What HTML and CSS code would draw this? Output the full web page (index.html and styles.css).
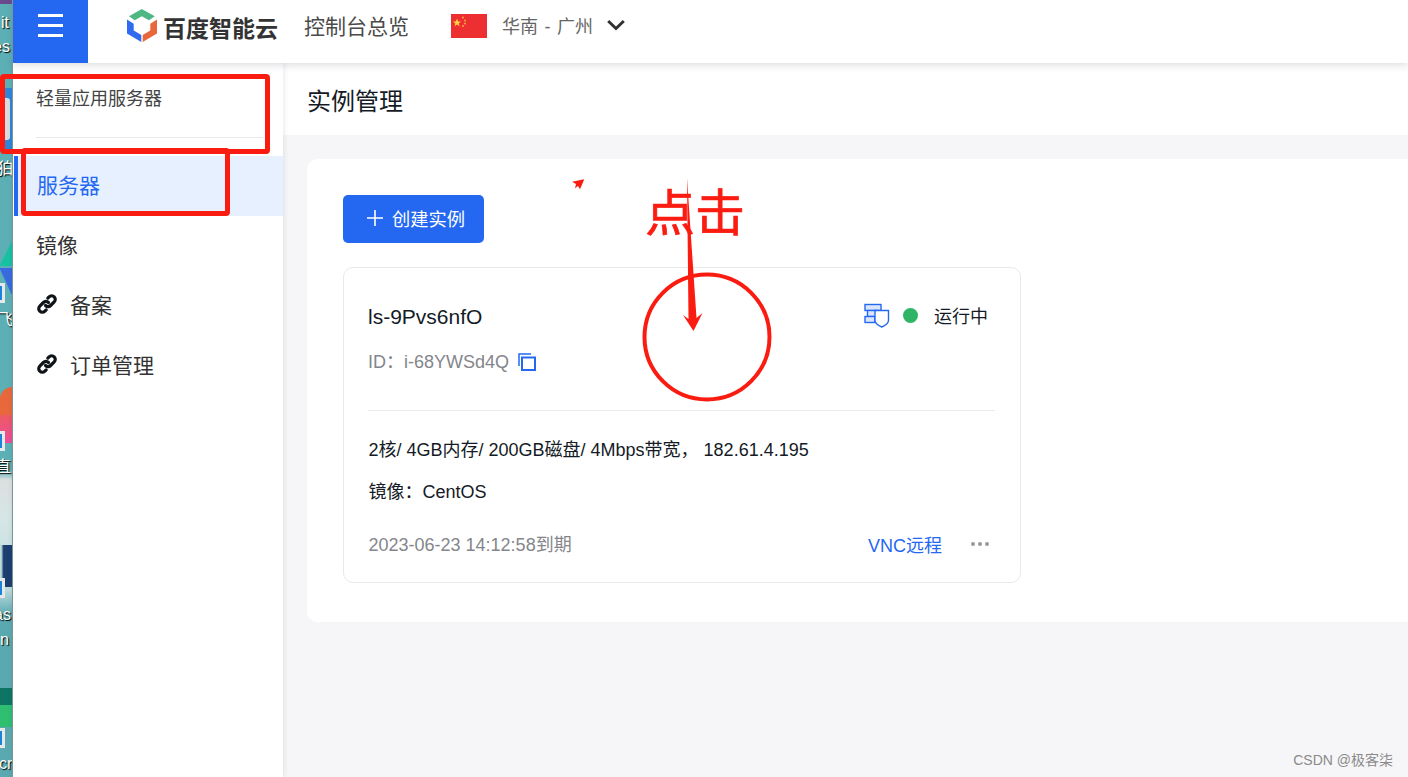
FILE: index.html
```html
<!DOCTYPE html>
<html lang="zh-CN">
  <head>
    <meta charset="UTF-8" />
    <title>百度智能云 - 实例管理</title>
    <link rel="stylesheet" href="styles.css">
  </head>
  <body>
    <!-- desktop peeking out on the left of the browser window -->
    <div class="desktop">
      <span class="desk-blob desk-top"></span>
      <span class="desk-blob desk-blue"></span>
      <span class="desk-blob desk-ring"></span>
      <span class="desk-blob desk-green"></span>
      <span class="desk-blob desk-indigo"></span>
      <span class="desk-blob desk-orange"></span>
      <span class="desk-blob desk-pink"></span>
      <span class="desk-blob desk-navy"></span>
      <span class="desk-blob desk-android"></span>
      <span class="desk-blob desk-android2"></span>
      <span class="desk-shortcut shortcut-1"></span>
      <span class="desk-shortcut shortcut-2"></span>
      <span class="desk-shortcut shortcut-3"></span>
      <span class="desk-shortcut shortcut-4"></span>
      <span class="desk-label label-it">it</span>
      <span class="desk-label label-es">es</span>
      <span class="desk-label label-gou">狛</span>
      <span class="desk-label label-fei">飞</span>
      <span class="desk-label label-zhi">直</span>
      <span class="desk-label label-as">as</span>
      <span class="desk-label label-n">n</span>
      <span class="desk-label label-cr">cr</span>
    </div>

    <div class="app">
      <header class="topbar">
        <button class="menu-btn" aria-label="menu">
          <span></span><span></span><span></span>
        </button>
        <div class="logo">
          <svg class="logo-icon" viewBox="0 0 30 33" width="30" height="33">
            <path d="M14.8 0 L27.8 7.3 L22 11.3 L14.8 7.3 L7.7 11.3 L2 7.3 Z" fill="#4fb783" />
            <path d="M0 10.6 L6.7 14.7 L6.7 21.5 L14.3 26 L14.3 33 L0 24.5 Z" fill="#2e6bee" />
            <path d="M30 10.6 L23.3 14.7 L23.3 21.5 L15.7 26 L15.7 33 L30 24.5 Z" fill="#e8683c" />
          </svg>
          <span class="logo-text">百度智能云</span>
        </div>
        <a class="overview">控制台总览</a>
        <svg class="flag" viewBox="0 0 36 24" width="36" height="24">
          <rect width="36" height="24" fill="#ee2f32" />
          <path d="M6 4.5 L7.1 7.5 L10 7.6 L7.7 9.4 L8.6 12.2 L6 10.6 L3.5 12.2 L4.3 9.4 L2 7.6 L4.9 7.5 Z" fill="#fbd33b" />
          <circle cx="12" cy="3.5" r="0.9" fill="#f6b53a" />
          <circle cx="14" cy="6.5" r="0.9" fill="#f6b53a" />
          <circle cx="14" cy="9.5" r="0.9" fill="#f6b53a" />
          <circle cx="12" cy="12" r="0.9" fill="#f6b53a" />
        </svg>
        <span class="region">华南 - 广州</span>
        <svg class="chevron" viewBox="0 0 18 12" width="18" height="12">
          <path d="M1.2 2 L9 9.5 L16.8 2" fill="none" stroke="#303133" stroke-width="3" />
        </svg>
      </header>

      <div class="body-row">
        <aside class="sidebar">
          <div class="side-title">轻量应用服务器</div>
          <ul class="side-menu">
            <li class="side-item active">服务器</li>
            <li class="side-item">镜像</li>
            <li class="side-item">
              <svg class="link-icon" viewBox="0 0 22 22" width="22" height="22">
                <path d="M9.5 12.5 a3.6 3.6 0 0 0 5.1 0 l3.6 -3.6 a3.6 3.6 0 0 0 -5.1 -5.1 l-1.3 1.3" fill="none" stroke="#101418" stroke-width="3.2" stroke-linecap="round" />
                <path d="M12.5 9.5 a3.6 3.6 0 0 0 -5.1 0 l-3.6 3.6 a3.6 3.6 0 0 0 5.1 5.1 l1.3 -1.3" fill="none" stroke="#101418" stroke-width="3.2" stroke-linecap="round" />
              </svg>
              备案
            </li>
            <li class="side-item">
              <svg class="link-icon" viewBox="0 0 22 22" width="22" height="22">
                <path d="M9.5 12.5 a3.6 3.6 0 0 0 5.1 0 l3.6 -3.6 a3.6 3.6 0 0 0 -5.1 -5.1 l-1.3 1.3" fill="none" stroke="#101418" stroke-width="3.2" stroke-linecap="round" />
                <path d="M12.5 9.5 a3.6 3.6 0 0 0 -5.1 0 l-3.6 3.6 a3.6 3.6 0 0 0 5.1 5.1 l1.3 -1.3" fill="none" stroke="#101418" stroke-width="3.2" stroke-linecap="round" />
              </svg>
              订单管理
            </li>
          </ul>
        </aside>

        <main class="main">
          <div class="page-title">实例管理</div>
          <section class="panel">
            <button class="create-btn">
              <svg viewBox="0 0 16 16" width="16" height="16">
                <path d="M8 0 V16 M0 8 H16" stroke="#fff" stroke-width="1.6" />
              </svg>
              创建实例
            </button>

            <div class="instance">
              <div class="instance-head">
                <div>
                  <div class="instance-name">ls-9Pvs6nfO</div>
                  <div class="instance-id">
                    ID：i-68YWSd4Q
                    <svg viewBox="0 0 18 18" width="18" height="18">
                      <path d="M1 13 V1 H13" fill="none" stroke="#2468f2" stroke-width="1.5" />
                      <rect x="4" y="4.5" width="13" height="12.5" fill="none" stroke="#2468f2" stroke-width="2" />
                    </svg>
                  </div>
                </div>
                <div class="status">
                  <svg viewBox="0 0 26 25" width="26" height="25">
                    <rect x="1" y="1.5" width="16" height="6" fill="#dbe6fd" stroke="#2468f2" stroke-width="1.4" />
                    <rect x="3.5" y="7.5" width="9" height="6" fill="#dbe6fd" stroke="#2468f2" stroke-width="1.4" />
                    <rect x="1" y="13.5" width="10" height="6" fill="#dbe6fd" stroke="#2468f2" stroke-width="1.4" />
                    <path d="M11 7.5 H24.5 V17.5 C24.5 20 21 22.5 17.8 24 C14.5 22.5 11 20 11 17.5 Z" fill="#fff" stroke="#2468f2" stroke-width="1.4" />
                  </svg>
                  <span class="status-dot"></span>
                  <span class="status-text">运行中</span>
                </div>
              </div>
              <div class="instance-spec">
                <p>2核/ 4GB内存/ 200GB磁盘/ 4Mbps带宽， 182.61.4.195</p>
                <p>镜像：CentOS</p>
              </div>
              <div class="instance-foot">
                <span class="expire">2023-06-23 14:12:58到期</span>
                <span class="foot-actions">
                  <a class="vnc">VNC远程</a>
                  <span class="more"><i></i><i></i><i></i></span>
                </span>
              </div>
            </div>
          </section>
        </main>
      </div>
    </div>

    <!-- red marks drawn over the screenshot -->
    <span class="mark mark-title"></span>
    <span class="mark mark-item"></span>
    <span class="click-note">点击</span>
    <svg class="scribble" viewBox="0 0 1408 777" width="1408" height="777">
      <circle cx="707" cy="337" r="62.5" fill="none" stroke="#fb1c11" stroke-width="4" />
      <path d="M687 178 L696.5 318 L702.5 313 L693.5 331 L683 315 L688.5 319 Z" fill="#fb1c11" />
      <path d="M572 181.7 L584.3 179.3 L580 189.3 L578 186 L575 188.3 L576 184 Z" fill="#fb1c11" />
    </svg>

    <div class="watermark">CSDN @极客柒</div>
  </body>
</html>
```

FILE: styles.css
```css
* {
  box-sizing: border-box;
}

html,
body {
  height: 100%;
}

body {
  margin: 0;
  display: flex;
  overflow: hidden;
  font-family: "Liberation Sans", "Noto Sans CJK SC", sans-serif;
  color: #151b26;
}

/* desktop strip */
.desktop {
  position: relative;
  width: 13px;
  flex-shrink: 0;
  overflow: hidden;
  background: linear-gradient(to bottom, #5cb0b5 0, #5cb0b5 470px, #dcdfe0 480px, #d6e6e6 520px, #bcdcdc 590px, #5ba9b0 615px, #5ba9b0 100%);
  border-right: 1px solid #7f9ea1;
}

.desk-blob {
  position: absolute;
  left: 0;
  width: 12px;
}

.desk-top {
  top: 0;
  height: 4px;
  background: #6a4a8c;
}

.desk-blue {
  top: 88px;
  height: 62px;
  background: #2f86d8;
}

.desk-ring {
  top: 98px;
  height: 42px;
  width: 8px;
  left: 2px;
  background: #d8dde2;
  border-radius: 3px;
}

.desk-green {
  top: 242px;
  height: 24px;
  background: linear-gradient(to bottom right, #5cb0b5 45%, #17c2a2 50%);
}

.desk-indigo {
  top: 268px;
  height: 26px;
  background: linear-gradient(to top right, #5cb0b5 45%, #3a6ae0 50%);
}

.desk-orange {
  top: 387px;
  height: 28px;
  background: #e8683c;
  border-radius: 14px 0 0 0;
}

.desk-pink {
  top: 415px;
  height: 28px;
  background: linear-gradient(to bottom, #ec5a62, #ee4d9c);
}

.desk-navy {
  top: 545px;
  height: 42px;
  background: linear-gradient(to left, #1c3f70 70%, #bcdcdc 90%);
}

.desk-android {
  top: 688px;
  height: 17px;
  background: #0e7564;
}

.desk-android2 {
  top: 705px;
  height: 22px;
  background: #2fbf71;
}

.desk-shortcut {
  position: absolute;
  left: -6px;
  width: 11px;
  height: 20px;
  background: #1b84d8;
  border: 3px solid #e6e8ea;
}

.shortcut-1 { top: 283px; }
.shortcut-2 { top: 431px; }
.shortcut-3 { top: 578px; }
.shortcut-4 { top: 728px; }

.desk-label {
  position: absolute;
  left: 0;
  font-size: 16px;
  line-height: 18px;
  color: #fff;
  white-space: nowrap;
  text-shadow: 1px 1px 1px #000;
}

.label-it { top: 14px; left: 1px; }
.label-es { top: 38px; left: -7px; }
.label-gou { top: 160px; left: -3px; }
.label-fei { top: 311px; left: -3px; }
.label-zhi { top: 458px; left: -5px; }
.label-as { top: 606px; left: -6px; }
.label-n { top: 631px; left: 0; }
.label-cr { top: 755px; left: -1px; }

.app {
  flex: 1;
  min-width: 0;
  display: flex;
  flex-direction: column;
}

/* top bar */
.topbar {
  position: relative;
  z-index: 2;
  height: 63px;
  flex-shrink: 0;
  display: flex;
  align-items: center;
  background: #fff;
  box-shadow: 0 2px 8px rgba(30, 40, 60, 0.16);
}

.menu-btn {
  width: 75px;
  height: 63px;
  padding: 14px 0 0;
  margin: 0;
  border: none;
  background: #2468f2;
  display: flex;
  flex-direction: column;
  align-items: center;
  justify-content: flex-start;
  gap: 7px;
}

.menu-btn span {
  width: 25px;
  height: 3px;
  background: #fff;
}

.logo {
  display: flex;
  align-items: center;
  margin-left: 39px;
  margin-bottom: 12px;
}

.logo-icon {
  margin-right: 6px;
}

.logo-text {
  margin-top: 3px;
  font-size: 23px;
  font-weight: bold;
  color: #333;
}

.overview {
  margin-left: 26px;
  margin-bottom: 14px;
  font-size: 21px;
  color: #4a4a4a;
}

.flag {
  margin-left: 42px;
  margin-bottom: 11px;
}

.region {
  margin-left: 15px;
  margin-bottom: 13px;
  font-size: 18px;
  word-spacing: 1.5px;
  color: #666;
}

.chevron {
  margin-left: 14px;
  margin-bottom: 13px;
}

.body-row {
  flex: 1;
  min-height: 0;
  display: flex;
}

/* sidebar */
.sidebar {
  width: 270px;
  flex-shrink: 0;
  background: #fff;
  box-shadow: 0 0 6px rgba(30, 40, 60, 0.14);
  position: relative;
  z-index: 1;
}

.side-title {
  height: 75px;
  margin: 0 20px 0 23px;
  padding-top: 25px;
  font-size: 18px;
  line-height: 22px;
  color: #444;
  border-bottom: 1px solid #e8e9eb;
}

.side-menu {
  list-style: none;
  margin: 18px 0 0;
  padding: 0;
}

.side-item {
  height: 60px;
  display: flex;
  align-items: center;
  gap: 12px;
  padding-left: 23px;
  padding-bottom: 4px;
  font-size: 21px;
  color: #333;
}

.side-item.active {
  color: #2468f2;
  background: #e6f0ff;
  border-left: 4px solid #2468f2;
  margin-left: 1px;
  padding-left: 19px;
}

.link-icon {
  flex-shrink: 0;
}

/* main */
.main {
  flex: 1;
  min-width: 0;
  background: #f6f6f8;
}

.page-title {
  height: 72px;
  padding: 21px 0 0 24px;
  font-size: 24px;
  line-height: 36px;
  color: #151b26;
  background: #fff;
}

.panel {
  margin: 24px 0 0 24px;
  height: 463px;
  padding: 36px;
  background: #fff;
  border-radius: 10px 0 0 10px;
}

.create-btn {
  width: 141px;
  height: 48px;
  padding: 0 0 2px 5px;
  border: none;
  border-radius: 5px;
  background: #2468f2;
  color: #fff;
  font-family: inherit;
  font-size: 18.3px;
  display: flex;
  align-items: center;
  justify-content: center;
  gap: 9px;
}

.instance {
  width: 678px;
  height: 316px;
  margin-top: 24px;
  padding: 0 25px 0 24px;
  border: 1px solid #e8e9eb;
  border-radius: 10px;
}

.instance-head {
  height: 143px;
  padding-top: 35px;
  display: flex;
  justify-content: space-between;
  align-items: flex-start;
  border-bottom: 1px solid #e8e9eb;
}

.instance-name {
  font-size: 21px;
  line-height: 28px;
  color: #151b26;
}

.instance-id {
  margin-top: 19px;
  display: flex;
  align-items: center;
  gap: 9px;
  font-size: 18px;
  line-height: 24px;
  color: #84868c;
}

.status {
  display: flex;
  align-items: center;
  padding-right: 7px;
  margin-top: -1px;
}

.status-dot {
  width: 15px;
  height: 15px;
  margin-left: 13px;
  border-radius: 50%;
  background: #30b566;
}

.status-text {
  margin-left: 16px;
  font-size: 18px;
  color: #151b26;
}

.instance-spec {
  padding: 27px 0 0 0.5px;
}

.instance-spec p {
  margin: 0 0 18px;
  font-size: 18px;
  line-height: 24px;
  color: #151b26;
}

.instance-foot {
  display: flex;
  justify-content: space-between;
  align-items: center;
  margin-top: 25px;
}

.expire {
  margin-left: 0.5px;
  font-size: 18px;
  color: #84868c;
}

.foot-actions {
  display: flex;
  align-items: center;
  gap: 29px;
  padding: 2px 6px 0 0;
}

.vnc {
  font-size: 18px;
  color: #2468f2;
}

.more {
  display: flex;
  gap: 3px;
}

.more i {
  width: 4px;
  height: 4px;
  border-radius: 50%;
  background: #999;
}

/* annotations */
.mark {
  position: absolute;
  z-index: 5;
  border: 5px solid #fb1c11;
  border-radius: 4px;
}

.mark-title {
  left: 0;
  top: 74px;
  width: 270px;
  height: 80px;
}

.mark-item {
  left: 21px;
  top: 148px;
  width: 209px;
  height: 68px;
}

.click-note {
  position: absolute;
  z-index: 5;
  left: 645px;
  top: 186px;
  font-size: 50px;
  line-height: 56px;
  -webkit-text-stroke: 0.7px #fb1c11;
  color: #fb1c11;
}

.scribble {
  position: absolute;
  z-index: 6;
  left: 0;
  top: 0;
  pointer-events: none;
}

.watermark {
  position: absolute;
  right: 15px;
  bottom: 8px;
  font-size: 14px;
  color: #8a8a8a;
}
```
